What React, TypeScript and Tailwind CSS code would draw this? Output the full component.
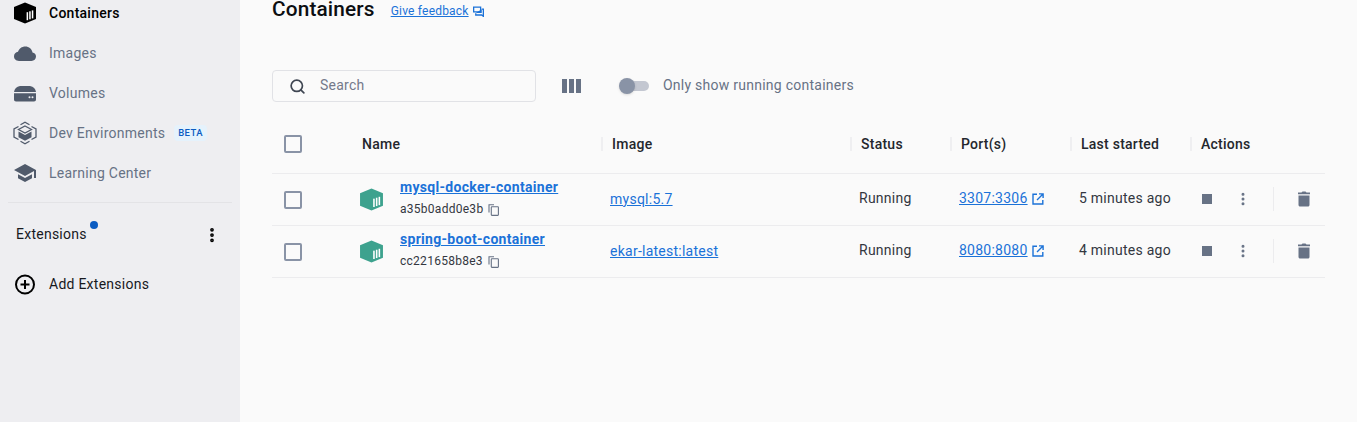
import React from "react";
import { Search, EllipsisVertical } from "lucide-react";

const Box = ({ color, size = 26 }: { color: string; size?: number }) => (
  <svg width={size} height={size} viewBox="0 0 24 24">
    <path d="M12 1.500 23 6v12l-11 4.500L1 18V6z" fill={color} />
    <g fill="#fff">
      <rect x="13.600" y="11.200" width="1.500" height="8" />
      <rect x="16.200" y="10.300" width="1.500" height="8" />
      <rect x="18.800" y="9.400" width="1.500" height="8" />
    </g>
  </svg>
);

const Cloud = () => (
  <svg width="24" height="24" viewBox="0 0 24 24" fill="#505a6b">
    <path d="M6 20c-3 0-5-2-5-4.700C1 12.800 2.800 11 5 10.800 6 7.700 8.800 5.500 12.300 5.500c3.700 0 6.700 2.600 7.200 6 2 .3 3.500 2 3.500 4.100 0 2.500-2 4.400-4.500 4.400z" />
  </svg>
);
const Volume = () => (
  <svg width="24" height="24" viewBox="0 0 24 24" fill="#505a6b">
    <path d="M1 11C1.500 7.500 3.500 5.500 7 5h10c3.500.5 5.500 2.500 6 6z" />
    <path d="M1 12.300h22v6.200c0 1.200-.8 2-2 2H3c-1.200 0-2-.8-2-2z" />
    <circle cx="16.500" cy="16.300" r="1" fill="#eeeef1" />
    <circle cx="19.500" cy="16.300" r="1" fill="#eeeef1" />
  </svg>
);
const DevEnv = () => (
  <svg width="24" height="24" viewBox="0 0 24 24" fill="none" stroke="#505a6b" strokeWidth="1.300">
    <path d="M5.500 5.500 1 8v8l4.500 2.500M18.500 5.500 23 8v8l-4.500 2.500M7.500 3.800 12 1.300l4.500 2.500M7.500 20.300l4.500 2.400 4.500-2.400" />
    <path d="M12 5 18.500 8.500 12 12 5.500 8.500z" />
    <path d="M5.500 10.500 12 14l6.500-3.500v5.800L12 19.800l-6.500-3.500z" fill="#505a6b" stroke="none" />
  </svg>
);
const School = () => (
  <svg width="24" height="24" viewBox="0 0 24 24" fill="#505a6b">
    <path d="M12 3 1 9l11 6 9-4.900V17h2V9z" />
    <path d="M5 13.200v4L12 21l7-3.800v-4L12 17z" />
  </svg>
);
const Feedback = () => (
  <svg width="11" height="11" viewBox="0 0 12 12" fill="none" stroke="#1b72d8" strokeWidth="1.400">
    <path d="M.7 1.200h7.600v5.300H.7z" />
    <path d="M9.500 3.500h1.800v7.800l-1.800-1.500H3V8" />
    <path d="M3 7.500h6.500V3.500" fill="#1b72d8" stroke="none" />
  </svg>
);
const CopyIcon = () => (
  <svg width="12" height="12" viewBox="0 0 12 12" fill="none" stroke="#677285" strokeWidth="1.100" className="ml-[5px] translate-y-[1px]">
    <path d="M1 8.500V.8h5" />
    <rect x="3.300" y="2.800" width="7.100" height="8.600" rx=".6" />
  </svg>
);
const Open = () => (
  <svg width="12" height="12" viewBox="0 0 12 12" fill="none" stroke="#1b72d8" strokeWidth="1.400" className="ml-[4px]">
    <path d="M5 1.200H1v9.800h9.800V7" />
    <path d="M7 .9h4.100V5M11 1 5 7" />
  </svg>
);
const Trash = () => (
  <svg width="18" height="18" viewBox="0 0 18 18" fill="#677285">
    <path d="M3.500 5.500h11V15c0 .9-.7 1.500-1.500 1.500H5c-.8 0-1.500-.6-1.500-1.500z" />
    <path d="M3 2.500h3.500l1-1h3l1 1H15v1.700H3z" />
  </svg>
);
const PlusCircle = () => (
  <svg width="24" height="24" viewBox="0 0 24 24" fill="none" stroke="#000" strokeWidth="2">
    <circle cx="12" cy="12.500" r="9" />
    <path d="M12 8v9M7.500 12.500h9" />
  </svg>
);

const NavItem = ({ icon, label, active, badge }: { icon: React.ReactNode; label: string; active?: boolean; badge?: boolean }) => (
  <div className="h-10 flex items-center pl-[13px]">
    <div className="w-[24px] h-[24px] flex items-center justify-center">{icon}</div>
    <span className={`ml-3 text-[14px] tracking-[0.25px] ${active ? "text-black font-medium" : "text-[#677285]"}`}>{label}</span>
    {badge && (
      <span className="ml-[9px] px-1 py-0.5 rounded bg-[#e5f2fc] text-[#0b5cc2] text-[9.500px] leading-[12px] font-medium tracking-[0.4px]">BETA</span>
    )}
  </div>
);

const Checkbox = () => <div className="w-[18px] h-[18px] rounded-[2px] border-2 border-[#8993a6]" />;

const HeaderCell = ({ label, divider = true }: { label: string; divider?: boolean }) => (
  <div className="flex items-center">
    <div className={`h-[14px] w-[2px] -ml-[1px] ${divider ? "bg-[#efeff1]" : ""}`} />
    <span className="ml-[9px] text-[14px] font-medium tracking-[0.25px] text-[#24272d]">{label}</span>
  </div>
);

const Row = ({ name, id, image, port, started }: { name: string; id: string; image: string; port: string; started: string }) => (
  <div className="grid grid-cols-[80px_250px_249px_100px_120px_120px_134px] h-[52px] border-b border-[#ececee] items-center">
    <div className="pl-[12px]"><Checkbox /></div>
    <div className="flex items-center pl-[7px]">
      <Box color="#3da28e" size={25} />
      <div className="ml-[16px] flex flex-col -translate-y-[2px]">
        <a className="text-[14px] leading-[20px] font-bold tracking-[0.3px] text-[#1b72d8] underline">{name}</a>
        <div className="flex items-center mt-[3px]">
          <span className="text-[12px] leading-[18px] tracking-[0.27px] text-[#33373f]">{id}</span>
          <CopyIcon />
        </div>
      </div>
    </div>
    <div className="pl-[8px] -translate-y-[1px]"><a className="text-[14px] tracking-[0.25px] text-[#1b72d8] underline">{image}</a></div>
    <div className="pl-[8px] -translate-y-[1px] text-[14px] tracking-[0.25px] text-[#33373f]">Running</div>
    <div className="pl-[8px] flex items-center -translate-y-[1px]">
      <a className="text-[14px] tracking-[0.25px] text-[#1b72d8] underline">{port}</a>
      <Open />
    </div>
    <div className="pl-[8px] -translate-y-[1px] text-[14px] tracking-[0.25px] text-[#33373f]">{started}</div>
    <div className="flex items-center h-full -translate-y-[1px]">
      <div className="ml-[11px] w-[10px] h-[10px] bg-[#677285]" />
      <EllipsisVertical size={16} className="ml-[23px] text-[#677285]" strokeWidth={2.500} />
      <div className="ml-[22px] w-px h-6 bg-[#ececee]" />
      <div className="ml-[21px]"><Trash /></div>
    </div>
  </div>
);

export default function App() {
  return (
    <div className="flex h-[422px] w-[1357px] overflow-hidden bg-[#fafafa] font-['Roboto',sans-serif]">
      <aside className="w-[240px] shrink-0 bg-[#eeeef1] -mt-[7px]">
        <NavItem icon={<Box color="#000" />} label="Containers" active />
        <NavItem icon={<Cloud />} label="Images" />
        <NavItem icon={<Volume />} label="Volumes" />
        <NavItem icon={<DevEnv />} label="Dev Environments" badge />
        <NavItem icon={<School />} label="Learning Center" />
        <div className="mx-2 mt-[9px] border-t border-[#e3e3e6]" />
        <div className="flex items-center justify-between h-[40px] mt-[11px] pl-[16px] pr-[19px]">
          <div className="relative text-[14px] tracking-[0.25px] text-[#17191e]">
            Extensions
            <span className="absolute -top-[3px] -right-[11px] w-2 h-2 rounded-full bg-[#0b5cc2]" />
          </div>
          <EllipsisVertical size={18} className="text-black translate-y-[1px]" strokeWidth={3} />
        </div>
        <div className="h-10 flex items-center pl-[13px] mt-[10px]">
          <PlusCircle />
          <span className="ml-3 text-[14px] tracking-[0.25px] text-[#17191e]">Add Extensions</span>
        </div>
      </aside>
      <main className="flex-1 pl-[32px] pr-[32px]">
        <div className="flex items-baseline h-[28px] -mt-[5px]">
          <h1 className="text-[20.800px] leading-[28px] font-medium tracking-[0.15px] text-[#0c0e11]">Containers</h1>
          <a className="ml-[16px] -translate-y-[1px] text-[12px] tracking-[0.2px] text-[#1b72d8] underline">Give feedback</a>
          <span className="ml-[4px] self-center translate-y-[2px]"><Feedback /></span>
        </div>
        <div className="flex items-center mt-[47px] h-[32px]">
          <div className="w-[264px] h-[32px] flex items-center rounded border border-[#e1e2e6] bg-[#fafafa] pl-[16px]">
            <Search size={17} className="text-[#3f4652]" strokeWidth={2.400} />
            <span className="ml-[14px] -translate-y-[1px] text-[14px] tracking-[0.25px] text-[#74798a]">Search</span>
          </div>
          <div className="ml-[26px] flex gap-[1.500px]">
            <div className="w-[5.330px] h-[14px] bg-[#677285]" />
            <div className="w-[5.330px] h-[14px] bg-[#677285]" />
            <div className="w-[5.330px] h-[14px] bg-[#677285]" />
          </div>
          <div className="relative ml-[39px] w-[29px] h-[10px] rounded-full bg-[#c3c7d1]">
            <div className="absolute -left-[1px] -top-[3px] w-4 h-4 rounded-full bg-[#8993a6] shadow" />
          </div>
          <span className="ml-[14px] -translate-y-[1px] text-[14px] tracking-[0.25px] text-[#677285]">Only show running containers</span>
        </div>
        <div className="grid grid-cols-[80px_250px_249px_100px_120px_120px_134px] h-[52px] pb-[7px] mt-[20px] border-b border-[#ececee] items-center">
          <div className="pl-[12px]"><Checkbox /></div>
          <HeaderCell label="Name" divider={false} />
          <HeaderCell label="Image" />
          <HeaderCell label="Status" />
          <HeaderCell label="Port(s)" />
          <HeaderCell label="Last started" />
          <HeaderCell label="Actions" />
        </div>
        <Row name="mysql-docker-container" id="a35b0add0e3b" image="mysql:5.7" port="3307:3306" started="5 minutes ago" />
        <Row name="spring-boot-container" id="cc221658b8e3" image="ekar-latest:latest" port="8080:8080" started="4 minutes ago" />
      </main>
    </div>
  );
}
